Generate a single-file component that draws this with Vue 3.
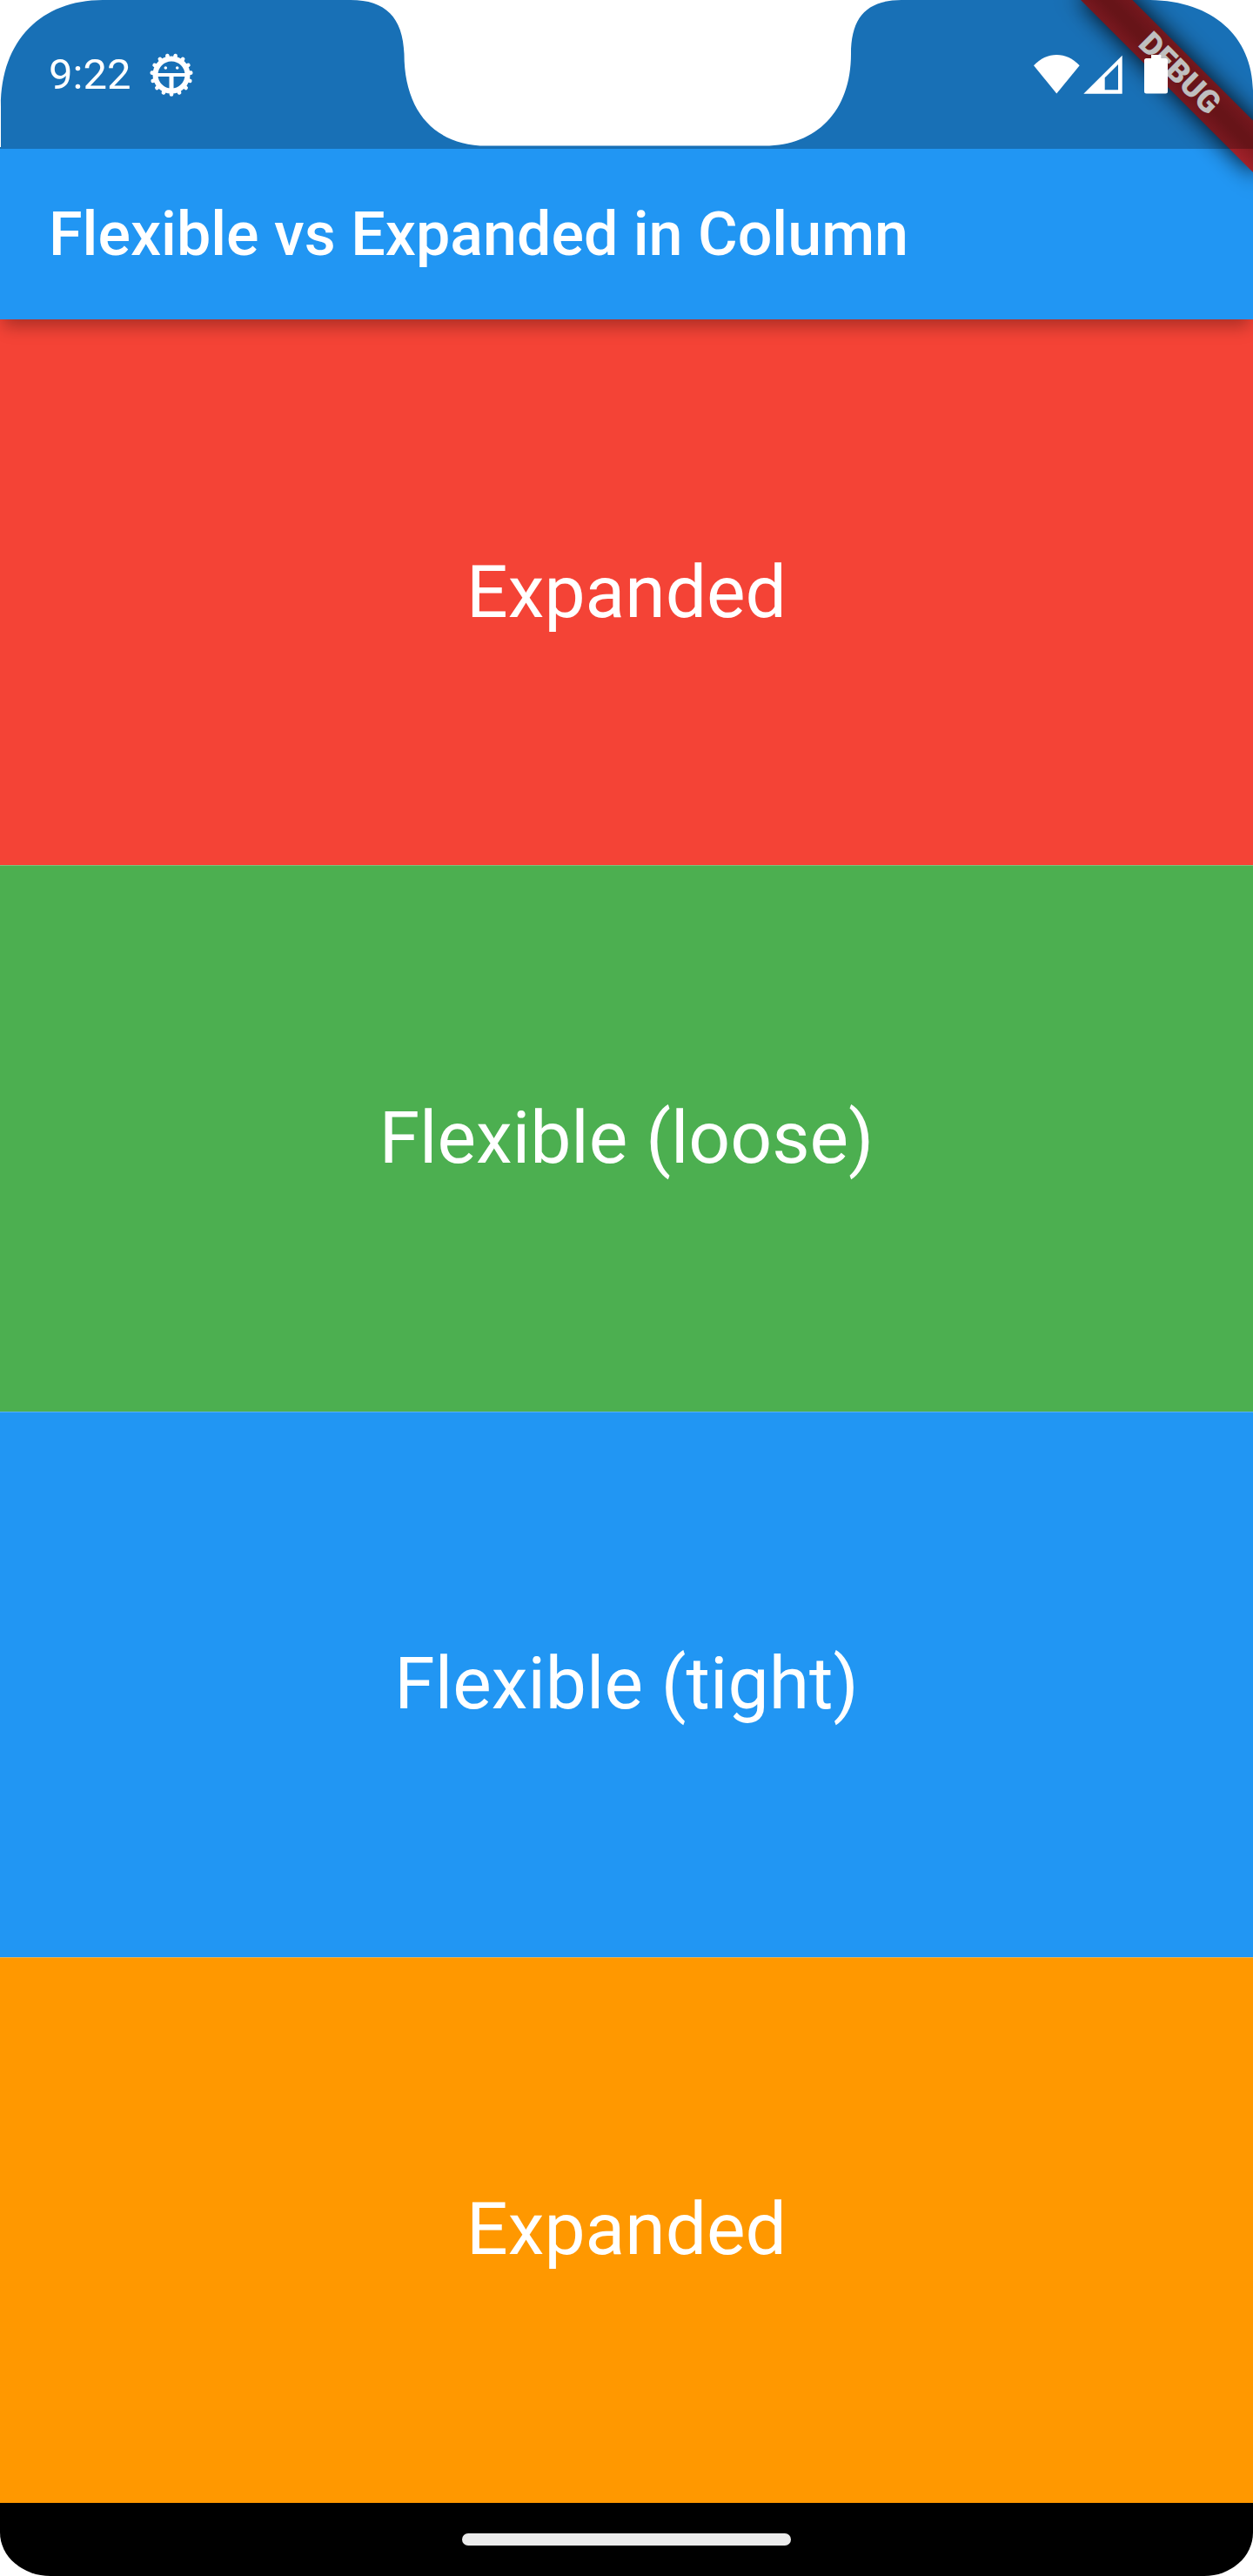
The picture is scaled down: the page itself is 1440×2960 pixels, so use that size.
<script setup>
const panels = [
  { label: 'Expanded', tone: 'red' },
  { label: 'Flexible (loose)', tone: 'green' },
  { label: 'Flexible (tight)', tone: 'blue' },
  { label: 'Expanded', tone: 'orange' },
]
const teeth = Array.from({ length: 15 }, (_, i) => 12 + i * 24)
</script>

<template>
  <div class="screen">
    <header class="header">
      <div class="app-bar">
        <h1 class="title">Flexible vs Expanded in Column</h1>
      </div>

      <div class="banner"><span class="banner-text">DEBUG</span></div>

      <div class="status-bar">
        <div class="status-group">
          <time class="clock">9:22</time>
          <svg class="icon" width="50" height="50" viewBox="-25 -25 50 50" aria-hidden="true">
            <circle r="18.5" fill="none" stroke="#fff" stroke-width="6" />
            <line
              v-for="angle in teeth"
              :key="angle"
              y1="-19"
              y2="-22.4"
              stroke="#fff"
              stroke-width="4.6"
              stroke-linecap="round"
              :transform="`rotate(${angle})`"
            />
            <path d="M-17-2H17V2H2.5V18H-2.5V2H-17Z" fill="#fff" />
            <circle cx="-6.7" cy="-8" r="1.8" fill="#fff" />
            <circle cx="6.7" cy="-8" r="1.8" fill="#fff" />
          </svg>
        </div>
        <div class="status-group status-right">
          <svg class="icon" width="102" height="45" viewBox="0 0 102 45" aria-hidden="true">
            <path d="M0 12.3C15-4.1 37.7-4.1 52.7 12.3L26.3 44.5Z" fill="#fff" />
            <path d="M57.3 44.7L101.7.7V44.7ZM81.7 26.3V40.3H97V11Z" fill="#fff" fill-rule="evenodd" />
          </svg>
          <svg class="icon" width="27" height="45" viewBox="0 0 27 45" aria-hidden="true">
            <path d="M8 0H19.3V4H24.5Q27 4 27 6.5V42Q27 44.5 24.5 44.5H2.5Q0 44.5 0 42V6.5Q0 4 2.5 4H8Z" fill="#fff" />
          </svg>
        </div>
      </div>

      <svg class="cutout cutout-left" width="120" height="170" viewBox="0 0 120 170" aria-hidden="true">
        <path d="M0 0H118C48 0 1 46 1 122V169H0Z" fill="#fff" />
      </svg>
      <svg class="cutout cutout-center" width="640" height="170" viewBox="400 0 640 170" aria-hidden="true">
        <path
          d="M403 0C443 0 463 20 464.5 62C464.5 128 500 167.5 559 167.5H879C938 167.5 978 128 978 62C978 20 996 0 1036 0Z"
          fill="#fff"
        />
      </svg>
      <svg class="cutout cutout-right" width="120" height="170" viewBox="1320 0 120 170" aria-hidden="true">
        <path d="M1322 0C1394 1 1439 42 1440 104V0Z" fill="#fff" />
      </svg>
    </header>

    <main class="column">
      <section v-for="(panel, i) in panels" :key="i" class="panel" :class="panel.tone">
        {{ panel.label }}
      </section>
    </main>

    <footer class="nav-bar">
      <div class="nav-handle"></div>
    </footer>
  </div>
</template>

<style>
body {
  margin: 0;
  background: #fff;
}
</style>

<style scoped>
.screen {
  display: flex;
  flex-direction: column;
  min-height: 100vh;
  font-family: Roboto, "Liberation Sans", sans-serif;
  color: #fff;
}

/* The extra bottom space keeps the app bar shadow inside the clipped area. */
.header {
  position: relative;
  z-index: 1;
  overflow: hidden;
  padding-bottom: 40px;
  margin-bottom: -40px;
}

/* The app bar continues underneath the translucent status bar. */
.app-bar {
  display: flex;
  align-items: center;
  height: 196px;
  padding: 171px 56px 0;
  background: #2196f3;
  box-shadow: 0 12px 18px -4px rgba(0, 0, 0, 0.3);
}

.title {
  margin: 0;
  font-size: 70px;
  font-weight: 500;
  line-height: 84px;
  white-space: nowrap;
}

.status-bar {
  position: absolute;
  top: 0;
  left: 0;
  right: 0;
  box-sizing: border-box;
  display: flex;
  align-items: center;
  justify-content: space-between;
  height: 171px;
  padding: 0 98px 0 56px;
  background: rgba(0, 0, 0, 0.25);
}

.status-group {
  display: flex;
  align-items: center;
  gap: 22px;
}

.status-right {
  gap: 25px;
}

.icon {
  display: block;
}

.clock {
  font-size: 49px;
  line-height: 58px;
}

.banner {
  position: absolute;
  top: 98px;
  left: calc(100% - 140px);
  width: 280px;
  height: 42px;
  transform-origin: 140px -98px;
  transform: rotate(45deg);
}

.banner::before,
.banner::after {
  content: "";
  position: absolute;
  inset: 0;
}

.banner::before {
  background: rgba(0, 0, 0, 0.9);
  filter: blur(14px);
}

.banner::after {
  background: linear-gradient(#9c2028, #8a1b21 40%, #8a1b21 60%, #a0212a);
}

.banner-text {
  position: relative;
  z-index: 1;
  display: block;
  font-size: 36px;
  font-weight: 900;
  line-height: 42px;
  text-align: center;
}

.cutout {
  position: absolute;
  top: 0;
}

.cutout-left {
  left: 0;
}

.cutout-center {
  left: 50%;
  margin-left: -320px;
}

.cutout-right {
  right: 0;
}

.column {
  display: flex;
  flex: 1;
  flex-direction: column;
}

.panel {
  display: flex;
  flex: 1;
  align-items: center;
  justify-content: center;
  font-size: 84px;
  line-height: 98px;
}

.panel + .panel {
  box-shadow: inset 0 1px rgba(255, 255, 255, 0.25);
}

.red {
  background: #f44336;
}

.green {
  background: #4caf50;
}

.blue {
  background: #2196f3;
}

.orange {
  background: #ff9800;
}

.nav-bar {
  display: flex;
  align-items: center;
  justify-content: center;
  height: 84px;
  background: #000;
  border-radius: 0 0 56px 58px / 0 0 50px 50px;
}

.nav-handle {
  width: 378px;
  height: 14px;
  border-radius: 7px;
  background: #ebebeb;
}
</style>
